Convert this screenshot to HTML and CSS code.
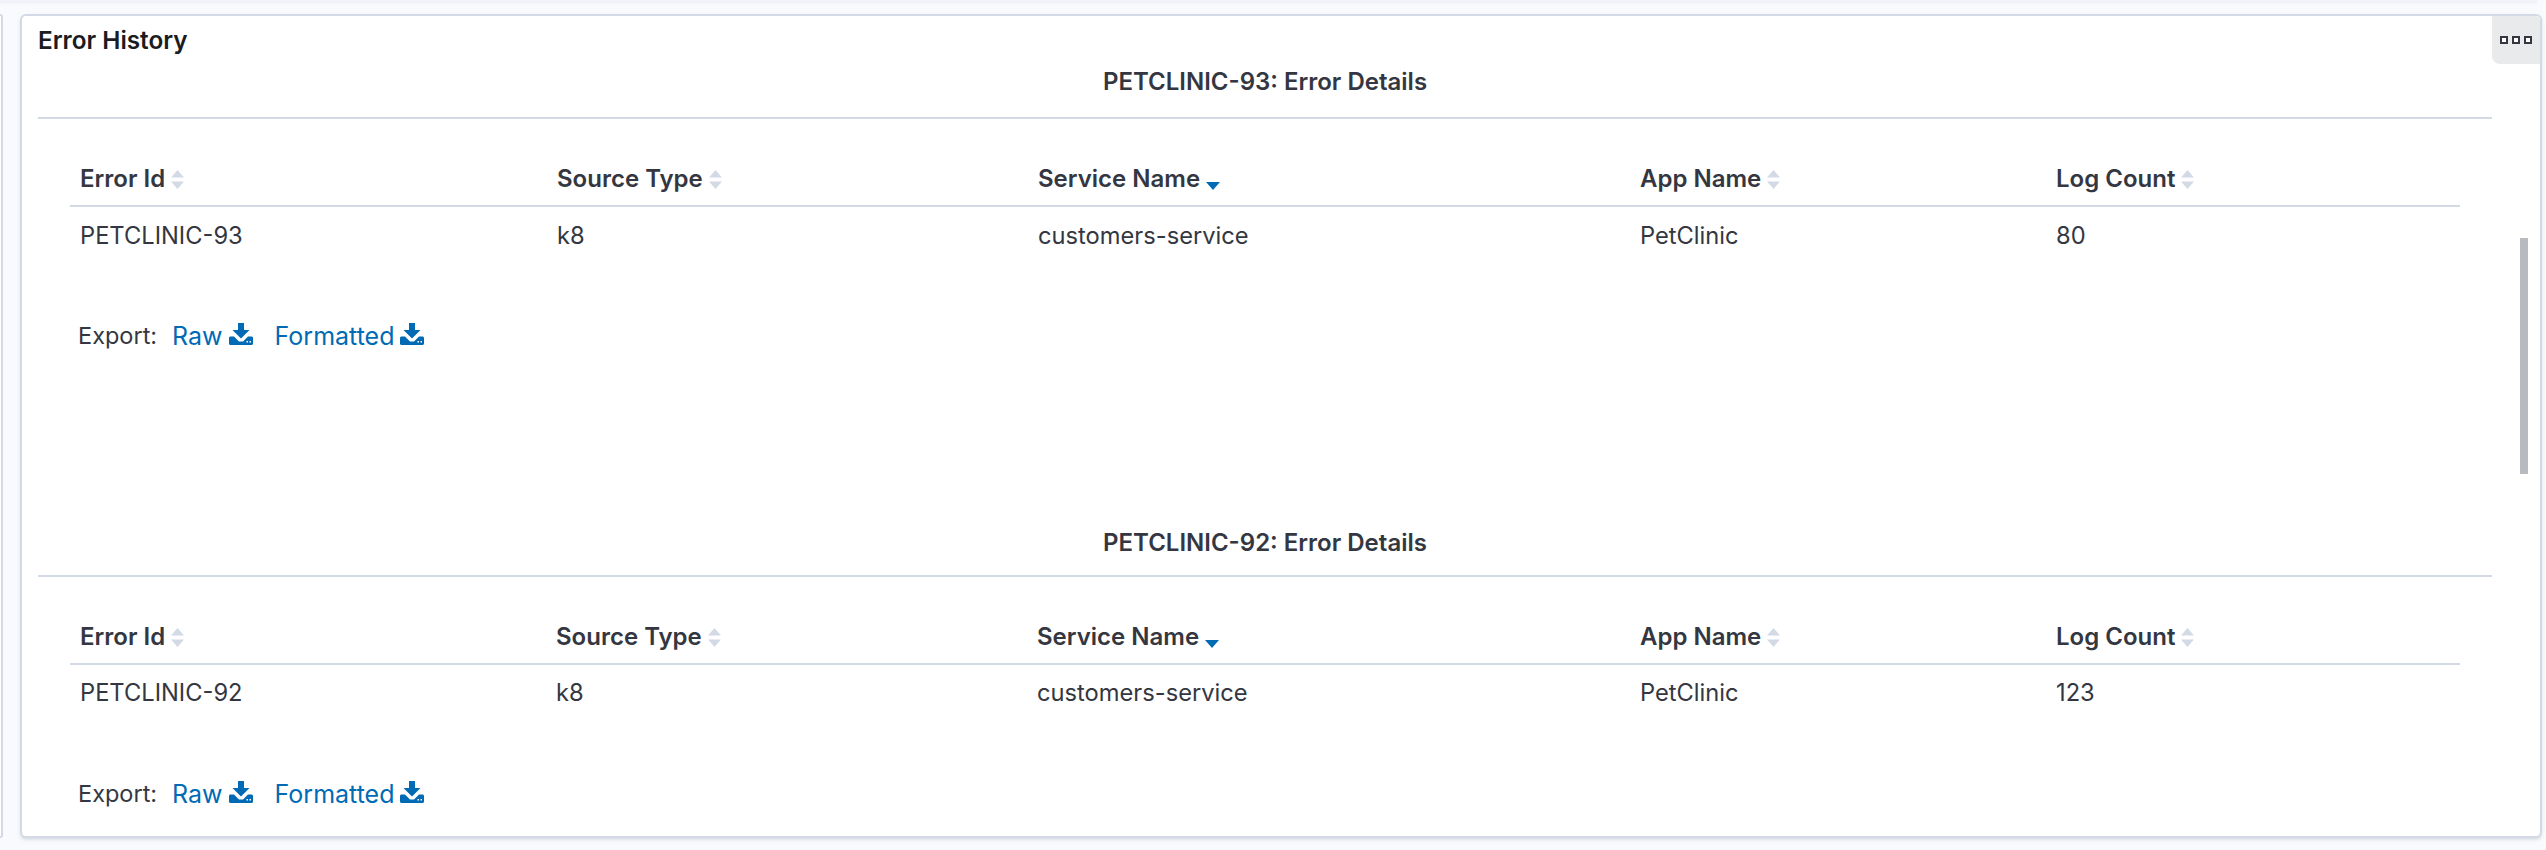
FILE: index.html
```html
<!DOCTYPE html>
<html lang="en">
<head>
<meta charset="utf-8">
<title>Error History</title>
<link rel="stylesheet" href="styles.css">
</head>
<body>
<svg class="defs" width="0" height="0" aria-hidden="true">
  <symbol id="dl" viewBox="0 0 24 22">
    <path d="M9 0h6v7h5.500L12 15.500 3.500 7H9z"/>
    <path fill-rule="evenodd" d="M0 15c0-.8.7-1.500 1.500-1.500H5l5 5h4l5-5h3.500c.8 0 1.500.7 1.500 1.500V20.500c0 .8-.7 1.500-1.500 1.500H1.500C.7 22 0 21.300 0 20.500zM17.500 18h1.500v1.500h-1.500zM20.500 18H22v1.500h-1.500z"/>
  </symbol>
  <symbol id="sort" viewBox="0 0 13 19">
    <path d="M6.500 0L13 7.500H0zM6.500 19L0 11.500h13z"/>
  </symbol>
</svg>
<div class="strip"></div>
<div class="page">
  <div class="side"></div>
  <main class="panel">
    <h1 class="panel-title">Error History</h1>
    <div class="menu"><i></i><i></i><i></i></div>
    <div class="scroll">
      <section class="details first">
        <h2 class="details-title">PETCLINIC-93: Error Details</h2>
        <div class="tbl">
          <div class="cell head lead">Error Id<svg class="sort"><use href="#sort"/></svg></div>
          <div class="cell head">Source Type<svg class="sort"><use href="#sort"/></svg></div>
          <div class="cell head">Service Name<span class="desc"></span></div>
          <div class="cell head">App Name<svg class="sort"><use href="#sort"/></svg></div>
          <div class="cell head">Log Count<svg class="sort"><use href="#sort"/></svg></div>
          <div class="cell lead">PETCLINIC-93</div>
          <div class="cell">k8</div>
          <div class="cell">customers-service</div>
          <div class="cell">PetClinic</div>
          <div class="cell">80</div>
        </div>
        <div class="export">
          <span class="export-label">Export:</span>
          <a class="link">Raw<svg class="dl"><use href="#dl"/></svg></a>
          <a class="link">Formatted<svg class="dl"><use href="#dl"/></svg></a>
        </div>
      </section>
      <section class="details">
        <h2 class="details-title">PETCLINIC-92: Error Details</h2>
        <div class="tbl second">
          <div class="cell head lead">Error Id<svg class="sort"><use href="#sort"/></svg></div>
          <div class="cell head">Source Type<svg class="sort"><use href="#sort"/></svg></div>
          <div class="cell head">Service Name<span class="desc"></span></div>
          <div class="cell head">App Name<svg class="sort"><use href="#sort"/></svg></div>
          <div class="cell head">Log Count<svg class="sort"><use href="#sort"/></svg></div>
          <div class="cell lead">PETCLINIC-92</div>
          <div class="cell">k8</div>
          <div class="cell">customers-service</div>
          <div class="cell">PetClinic</div>
          <div class="cell">123</div>
        </div>
        <div class="export">
          <span class="export-label">Export:</span>
          <a class="link">Raw<svg class="dl"><use href="#dl"/></svg></a>
          <a class="link">Formatted<svg class="dl"><use href="#dl"/></svg></a>
        </div>
      </section>
      <div class="thumb"></div>
    </div>
  </main>
</div>
</body>
</html>
```
FILE: styles.css
```css
* { box-sizing: border-box; }
html, body { margin: 0; height: 850px; overflow: hidden; }
body {
  background: #f8fafd;
  font-family: Inter, "Liberation Sans", sans-serif;
  color: #343741;
  position: relative;
}
.defs { position: absolute; }
.strip {
  height: 2px;
  margin-right: 9px;
  background: #f1f3f8;
  box-shadow: 0 1px 2px #e9edf3;
}
.page { display: flex; height: 848px; padding-top: 12px; }
.side {
  width: 3px;
  height: 824px;
  background: #fff;
  border: 2px solid #d3dae6;
  border-left: 0;
  border-radius: 0 5px 5px 0;
  flex: none;
}
.panel {
  position: relative;
  margin-left: 17px;
  width: 2522px;
  height: 824px;
  background: #fff;
  border: 2px solid #d3dae6;
  border-radius: 6px;
  box-shadow: 0 2px 3px rgba(152,162,179,.3);
  padding: 0 0 0 16px;
  overflow: hidden;
}
.panel-title {
  margin: 0;
  font-size: 24.3px;
  height: 36px;
  line-height: 48px;
  font-weight: 600;
  color: #1a1c21;
}
.menu {
  position: absolute;
  right: 0;
  top: 0;
  width: 48px;
  height: 48px;
  background: #e9eaec;
  border-radius: 0 5px 0 8px;
  display: flex;
  align-items: center;
  justify-content: center;
  gap: 4px;
}
.menu i {
  width: 8px;
  height: 8px;
  background: #fff;
  border: 2px solid #343741;
}
.scroll { position: relative; padding-right: 48px; }
.details-title {
  margin: 0;
  font-size: 24px;
  font-weight: 600;
  text-align: center;
  height: 48px;
  line-height: 27px;
  border-bottom: 2px solid #d3dae6;
  color: #343741;
}
.details.first { height: 477px; }
.details.first .details-title { padding-top: 17px; height: 67px; line-height: 25px; }
.tbl {
  display: grid;
  grid-template-columns: 476px 481px 602px 416px 415px;
  margin: 0 0 0 32px;
  width: 2390px;
}
.tbl.second { grid-template-columns: 475px 481px 603px 416px 415px; }
.cell {
  padding-left: 11px;
  height: 56px;
  font-size: 23.7px;
  line-height: 57px;
  white-space: nowrap;
}
.second .cell { line-height: 56px; }
.cell.lead { padding-left: 10px; }
.second .head,
.head {
  height: 88px;
  padding-top: 31px;
  font-size: 24px;
  line-height: 58px;
  font-weight: 600;
  border-bottom: 2px solid #d3dae6;
}
.sort {
  width: 13px;
  height: 19px;
  margin-left: 6px;
  fill: #d3dae6;
  vertical-align: -2px;
}
.desc {
  display: inline-block;
  width: 0;
  height: 0;
  margin-left: 6px;
  border: 7px solid transparent;
  border-top: 8px solid #006bb4;
  border-bottom: 0;
  vertical-align: -3px;
}
.export {
  display: flex;
  align-items: center;
  margin: 0 0 0 40px;
  padding-top: 35px;
  height: 110px;
  font-size: 25px;
}
.export-label { font-size: 23.5px; margin-right: 15px; }
.link { color: #006bb4; display: flex; align-items: center; margin-right: 22px; }
.dl {
  width: 24px;
  height: 22px;
  margin-left: 6px;
  margin-top: -3px;
  fill: #006bb4;
}
.thumb {
  position: absolute;
  left: 2482px;
  top: 186px;
  width: 8px;
  height: 236px;
  background: #b8babf;
}
```
